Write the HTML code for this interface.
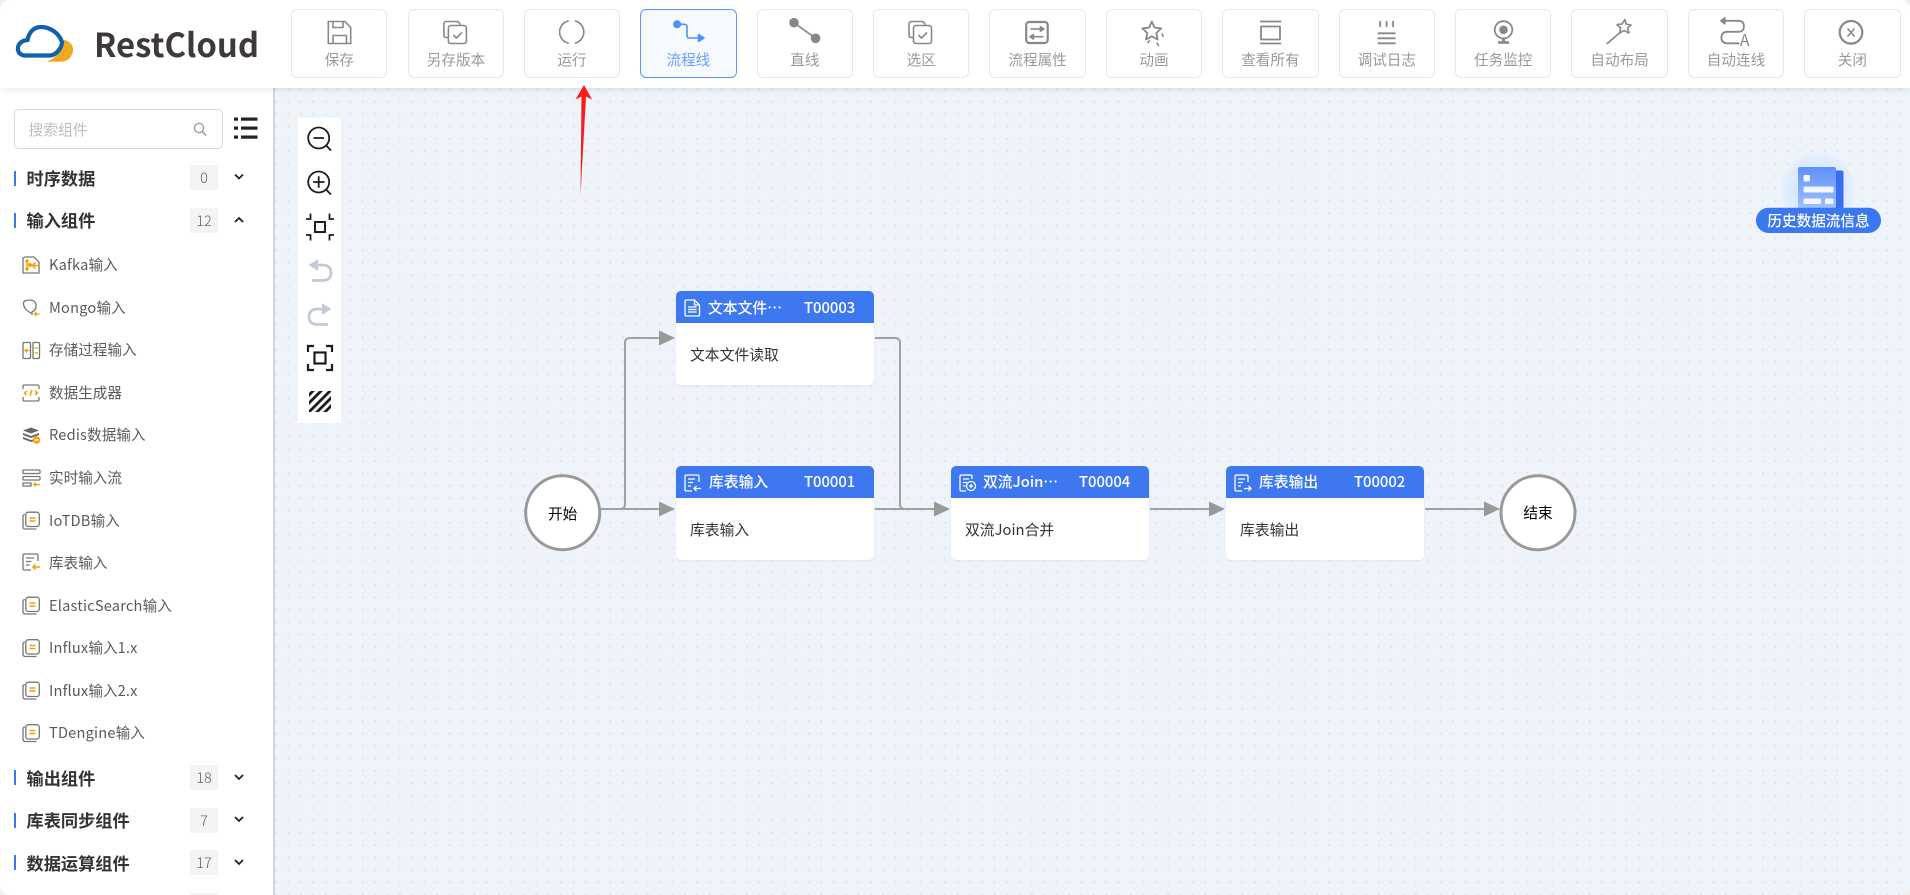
<!DOCTYPE html>
<html lang="zh"><head><meta charset="utf-8"><title>RestCloud</title>
<style>
html,body{margin:0;padding:0;width:1910px;height:895px;overflow:hidden;background:#efefef}
*{box-sizing:border-box}
#p{position:absolute;left:0;top:0;width:1910px;height:895px;overflow:hidden;border-radius:10px;background:#fff;font-family:"Noto Sans CJK SC","Liberation Sans",sans-serif;font-size:14.6px}
#cv{position:absolute;left:275px;top:88px;width:1635px;height:807px;background-color:#eff3fa;background-image:radial-gradient(circle at center,#dfe3ea 0,#dfe3ea .9px,transparent 1.3px);background-size:12.4px 12.4px;background-position:-5.2px -4.9px}
#sb{position:absolute;left:273px;top:88px;width:2px;height:807px;background:#d2d5da}
#hd{position:absolute;left:0;top:0;width:1910px;height:88px;background:#fff;box-shadow:0 1px 7px rgba(60,70,90,.14)}
.b{position:absolute;top:9px;width:96.4px;height:69px;border:1px solid #e1e9f4;border-radius:6px;background:#fff}
.b span{position:absolute;left:0;right:0;top:40px;line-height:20px;text-align:center;color:#999;white-space:nowrap}
.b.on{border-color:#5b97fb;background:#f6faff}.b.on span{color:#66a0fd}
.t{position:absolute;line-height:20px;height:20px;white-space:nowrap}
.it{left:49px;color:#5a5a5a}
.l{letter-spacing:.2px}
.h{left:26.5px;font-size:17.2px;font-weight:700;color:#333;line-height:24px;height:24px}
.bar{position:absolute;left:14px;width:2px;height:15px;background:#3b78f0}
.n{position:absolute;left:190px;width:28px;height:25px;background:#f4f4f4;color:#666;text-align:center;line-height:25px;font-weight:300}
.node{position:absolute;width:198px;height:94px;background:#fff;border-radius:5px;box-shadow:0 1px 2px rgba(60,80,120,.07)}
.node i{position:absolute;left:0;top:0;width:198px;height:32px;background:#3d78f0;border-radius:5px 5px 0 0}
.w{color:#fff;font-weight:500;font-size:14.8px}
.d{color:#333;font-size:14.8px}
#s{position:absolute;left:14px;top:109px;width:209px;height:40px;border:1px solid #d9d9d9;border-radius:5px;background:#fff}
#ov{position:absolute;left:0;top:0;width:1910px;height:895px}
</style></head><body><div id="p">
<div id="cv"></div><div id="sb"></div>

<div class="node" style="left:676px;top:291px"><i></i></div>
<div class="node" style="left:676px;top:466px"><i></i></div>
<div class="node" style="left:951px;top:466px"><i></i></div>
<div class="node" style="left:1226px;top:466px"><i></i></div>

<svg style="position:absolute;left:0;top:0" width="1910" height="895" fill="none">
<g stroke="#a2a2a2" stroke-width="2">
<path d="M601 509H620q5 0 5-5V343q0-5 5-5H660"/>
<path d="M601 509H660"/>
<path d="M875 338H895q5 0 5 5V504q0 5 5 5H935"/>
<path d="M875 509H935"/>
<path d="M1150 509H1210"/>
<path d="M1425 509H1485"/>
</g>
<g fill="#999">
<path d="M659 330.500L675 338L659 345.500z"/><path d="M659 501.500L675 509L659 516.500z"/>
<path d="M934 501.500L950 509L934 516.500z"/><path d="M1209 501.500L1225 509L1209 516.500z"/><path d="M1484 501.500L1500 509L1484 516.500z"/>
</g>
<circle cx="562.700" cy="512.700" r="37" fill="#fff" stroke="#999" stroke-width="3"/>
<circle cx="1538" cy="512.700" r="37" fill="#fff" stroke="#999" stroke-width="3"/>
<!-- history widget -->
<defs><radialGradient id="hg" cx=".5" cy=".5" r=".5"><stop offset="0" stop-color="#c4ddff"/><stop offset=".7" stop-color="#dceaff"/><stop offset="1" stop-color="#e6f0fe"/></radialGradient>
<linearGradient id="dg" x1="0" y1="0" x2="0" y2="1"><stop offset="0" stop-color="#5f90fb"/><stop offset="1" stop-color="#a2c0ff"/></linearGradient>
<clipPath id="hc"><rect x="309" y="391" width="22" height="21"/></clipPath></defs>
<circle cx="1818" cy="190" r="37" fill="url(#hg)"/>
<rect x="1834" y="170.500" width="9.500" height="38" rx="2" fill="#3a6df2"/>
<rect x="1798" y="167" width="38" height="42" rx="2" fill="url(#dg)"/>
<g fill="#f2f6ff"><rect x="1803.500" y="175" width="6.500" height="6.500" rx="1"/><rect x="1803.500" y="186.500" width="30" height="6" rx="1"/><rect x="1803.500" y="198.500" width="17.500" height="5.500" rx="1"/><rect x="1825" y="198.500" width="8.500" height="5.500" rx="1"/></g>
<rect x="1756" y="207.700" width="125" height="25.300" rx="12.600" fill="#3b78f0"/>
</svg>

<div class="t" style="left:1756px;top:211px;width:125px;text-align:center;color:#fff;font-weight:500;font-size:14.6px">历史数据流信息</div>
<div class="t" style="left:532.700px;top:504px;width:60px;text-align:center;color:#000">开始</div>
<div class="t" style="left:1508px;top:503px;width:60px;text-align:center;color:#000">结束</div>

<div class="t w" style="left:708px;top:297.500px">文本文件…</div><div class="t w" style="left:804px;top:297.500px">T00003</div>
<div class="t d" style="left:690px;top:345px">文本文件读取</div>
<div class="t w" style="left:709px;top:472px">库表输入</div><div class="t w" style="left:804px;top:472px">T00001</div>
<div class="t d" style="left:690px;top:520px">库表输入</div>
<div class="t w" style="left:983px;top:472px">双流Join…</div><div class="t w" style="left:1079px;top:472px">T00004</div>
<div class="t d" style="left:965px;top:520px">双流Join合并</div>
<div class="t w" style="left:1259px;top:472px">库表输出</div><div class="t w" style="left:1354px;top:472px">T00002</div>
<div class="t d" style="left:1240px;top:520px">库表输出</div>

<div id="hd">
<div class="b" style="left:291px"><span>保存</span></div>
<div class="b" style="left:408px;width:96px"><span>另存版本</span></div>
<div class="b" style="left:523.800px"><span>运行</span></div>
<div class="b on" style="left:640.200px"><span>流程线</span></div>
<div class="b" style="left:756.600px"><span>直线</span></div>
<div class="b" style="left:873px"><span>选区</span></div>
<div class="b" style="left:989.400px"><span>流程属性</span></div>
<div class="b" style="left:1105.800px"><span>动画</span></div>
<div class="b" style="left:1222.200px"><span>查看所有</span></div>
<div class="b" style="left:1338.600px"><span>调试日志</span></div>
<div class="b" style="left:1455px"><span>任务监控</span></div>
<div class="b" style="left:1571.400px"><span>自动布局</span></div>
<div class="b" style="left:1687.800px"><span>自动连线</span></div>
<div class="b" style="left:1804.200px"><span>关闭</span></div>
</div>

<div id="s"></div>
<div class="t" style="left:28.500px;top:120px;color:#bdbdbd;font-size:14.8px">搜索组件</div>

<div class="bar" style="top:171px"></div><div class="t h" style="top:166px">时序数据</div><div class="n" style="top:165px">0</div>
<div class="bar" style="top:213px"></div><div class="t h" style="top:208px">输入组件</div><div class="n" style="top:208px">12</div>
<div class="t it" style="top:255px"><span class="l">Kafka</span>输入</div>
<div class="t it" style="top:297.700px"><span class="l">Mongo</span>输入</div>
<div class="t it" style="top:340px">存储过程输入</div>
<div class="t it" style="top:382.700px">数据生成器</div>
<div class="t it" style="top:425px"><span class="l">Redis</span>数据输入</div>
<div class="t it" style="top:467.500px">实时输入流</div>
<div class="t it" style="top:510.500px"><span class="l">IoTDB</span>输入</div>
<div class="t it" style="top:552.700px">库表输入</div>
<div class="t it" style="top:596px"><span class="l">ElasticSearch</span>输入</div>
<div class="t it" style="top:637.700px"><span class="l">Influx</span>输入<span class="l">1.x</span></div>
<div class="t it" style="top:680.500px"><span class="l">Influx</span>输入<span class="l">2.x</span></div>
<div class="t it" style="top:723px"><span class="l">TDengine</span>输入</div>
<div class="bar" style="top:770px"></div><div class="t h" style="top:766px">输出组件</div><div class="n" style="top:765px">18</div>
<div class="bar" style="top:812.500px"></div><div class="t h" style="top:808px">库表同步组件</div><div class="n" style="top:808px">7</div>
<div class="bar" style="top:855px"></div><div class="t h" style="top:850.500px">数据运算组件</div><div class="n" style="top:850px">17</div>
<div class="n" style="top:893px"></div>

<svg id="ov" width="1910" height="895" fill="none">
<!-- logo -->
<path d="M65 40C71 42 73.500 46 73 51C72 57 68 61.500 61 61.700H47C56 58 62 50 64 40z" fill="#efaa22"/>
<path d="M24 55.500C19 54.500 17.500 51 18 47.500C18.500 43.500 22 40.500 27.500 40C29 32 34 27 41 27C50 27 59 33 62 42C62 47 57 55.500 49 55.500z" stroke="#0f61ae" stroke-width="4.200" fill="#fff"/>
<text x="94" y="56.800" font-family="Noto Sans CJK SC,Liberation Sans,sans-serif" font-size="33" font-weight="700" fill="#3f3a39" textLength="165" lengthAdjust="spacingAndGlyphs">RestCloud</text>

<!-- toolbar icons -->
<g stroke="#888" stroke-width="1.600" stroke-linejoin="round">
<g transform="translate(319.500,16)"><path d="M8.800 5.500H25.500L31.200 11.500V27.500H8.800z"/><path d="M13.500 5.500V11.500H23.500V5.500"/><path d="M13.500 27.500V19.500H27V27.500"/></g>
<g transform="translate(435.400,16)"><path id="q" d="M13 21.500H11Q8.500 21.500 8.500 19V8Q8.500 5.500 11 5.500H21Q24.500 5.500 24.500 9.500"/><rect x="13" y="9.500" width="18" height="18" rx="2.500"/><path d="M18 19L21 22L26.500 16.500"/></g>
<g transform="translate(551.700,16)"><path d="M17 4.800A11.500 11.500 0 0 0 17 27.300"/><path d="M23 4.800A11.500 11.500 0 0 1 23 27.300"/></g>
<g transform="translate(668.500,16)" stroke="#4f90fb"><circle cx="8.600" cy="8.300" r="3.200" fill="#4f90fb"/><path d="M8.600 8.300H16Q18.500 8.300 18.500 10.800V19.500Q18.500 22 21 22H32"/><path d="M30 18.500L35.500 22L30 25.500z" fill="#4f90fb"/></g>
<g transform="translate(784.600,16)"><path d="M9.400 6.700L31 22.300"/><circle cx="9.400" cy="6.700" r="4" fill="#888"/><circle cx="31" cy="22.300" r="4" fill="#888"/></g>
<g transform="translate(901,16)"><path d="M12.500 21.500H10.500Q8 21.500 8 19V8Q8 5.500 10.500 5.500H20.500Q24 5.500 24 9.500"/><rect x="12.500" y="9.500" width="18" height="18" rx="2.500"/><path d="M17.500 19L20.500 22L26 16.500"/></g>
<g transform="translate(1017.400,16)"><rect x="8.800" y="6" width="21.500" height="21" rx="3" stroke-width="2.200"/><path d="M13 13H25" /><path d="M23 10.800L26.500 13L23 15.200z" fill="#888"/><path d="M14 20.700H26"/><path d="M16 18.500L12.500 20.700L16 22.900z" fill="#888"/></g>
<g transform="translate(1133.800,16)"><path d="M18 5.500L20.700 11.600L27.500 12.400L22.500 17L23.800 23.500L18 20.300L12.200 23.500L13.500 17L8.500 12.400L15.300 11.600z" stroke-width="1.800"/><path d="M13.500 27L16 24.500M25 30L23 26.500M29.500 21L28 17.500"/></g>
<g transform="translate(1250.200,16)"><path d="M9.800 5.500H31M9.800 27.500H31" stroke-width="1.800"/><rect x="10.800" y="10.500" width="19" height="13" stroke-width="1.800"/></g>
<g transform="translate(1366.600,16)" stroke-width="1.800"><path d="M13.600 5V11M20 5V11M26.500 5V11"/><path d="M11 17.300H29M11 22.300H29M11 27.300H29"/></g>
<g transform="translate(1483,16)"><ellipse cx="20.500" cy="13.800" rx="8.800" ry="8.600" stroke-width="1.800"/><circle cx="20.500" cy="13.800" r="3.500" fill="#888"/><path d="M20.500 22.500V25.500" stroke-width="3"/><path d="M15 26.500H26" stroke-width="2.600"/></g>
<g transform="translate(1599,16)"><path d="M7.700 28L21 16.500" stroke-width="1.800"/><path d="M26 3.500L27 8L32 9L28.500 12L30 17L25 14.500L21 17L21.500 12L18 8.500L23 8z"/></g>
<g transform="translate(1715.400,16)"><path d="M8 4.800H23Q28.500 4.800 28.500 10.300T23 15.800H12Q6 15.800 6 21.500T12 27.300H24" stroke-width="1.800"/><path d="M9.500 1.800L5.500 4.800L9.500 7.800z" fill="#888"/></g>
<g transform="translate(1832,16)"><circle cx="19" cy="16.300" r="11.300" stroke-width="2.200"/><path d="M15.500 12.500L22.500 20.500M22.500 12.500L15.500 20.500"/></g>
</g>
<text x="1744.800" y="46" text-anchor="middle" font-family="Noto Sans CJK SC,sans-serif" font-size="16" fill="#888">A</text>

<!-- search + list -->
<circle cx="199" cy="128" r="4.600" stroke="#999" stroke-width="1.300"/><path d="M202.300 131.500L206 135.500" stroke="#999" stroke-width="1.400"/>
<g fill="#222"><rect x="234" y="117.500" width="4" height="3.200"/><rect x="241" y="117.500" width="16.500" height="3.200"/><rect x="234" y="126.500" width="4" height="3.200"/><rect x="241" y="126.500" width="16.500" height="3.200"/><rect x="234" y="135.500" width="4" height="3.200"/><rect x="241" y="135.500" width="16.500" height="3.200"/></g>
<g stroke="#222" stroke-width="1.800"><path d="M235 174.500L239 178.500L243 174.500"/><path d="M235 222L239 218L243 222"/><path d="M235 775L239 779L243 775"/><path d="M235 817L239 821L243 817"/><path d="M235 860L239 864L243 860"/></g>

<!-- sidebar icons -->
<g stroke-width="1.300">
<g transform="translate(22,256)"><path d="M3 1H12L17 6V17H1V2z" stroke="#777"/><g fill="#f5a000" stroke="none"><circle cx="5" cy="5" r="1.800"/><circle cx="5" cy="13" r="1.800"/><circle cx="8" cy="9" r="2"/><rect x="4.300" y="5" width="1.400" height="8"/></g><path d="M17 9.500H10.500M13.500 6.500L10.500 9.500L13.500 12.500" stroke="#f5a000" stroke-width="1.500"/></g>
<g transform="translate(22,299)"><path d="M10 14C5 13 2 9 1.500 5C1 2 4 1 8 1C12 1 14.500 3.500 14 8C13.800 10 12 12 10 13V16" stroke="#777"/><path d="M17.500 15H12.500M14.500 13L12.500 15L14.500 17" stroke="#f5a000"/></g>
<g transform="translate(22,341)"><rect x="1" y="1.500" width="7.500" height="16" rx="1" stroke="#777"/><rect x="11" y="1.500" width="6.500" height="16" rx="1" stroke="#777"/><path d="M7.500 9.500H3M5 7.500L3 9.500L5 11.500M12.500 7H16M12.500 12H16" stroke="#f5a000"/></g>
<g transform="translate(22,384)"><path d="M1 5V2.500Q1 1 2.500 1H15.500Q17 1 17 2.500V5M1 13V15.500Q1 17 2.500 17H15.500Q17 17 17 15.500V13" stroke="#777"/><path d="M4.800 7L2.500 9L4.800 11M13.200 7L15.500 9L13.200 11M10 6L8 12" stroke="#f5a000" stroke-width="1.500"/></g>
<g transform="translate(22,426)"><g fill="#666"><path d="M1 4.500L9 1.500L17 4.500L9 7.500z"/><path d="M1 7L9 10L17 7V9L9 12L1 9z"/><path d="M1 11L9 14L11 13.500V15.500L9 16L1 13z"/></g><circle cx="14.500" cy="14" r="3.700" fill="#f5a000"/><path d="M12.500 14H16.500" stroke="#fff"/></g>
<g transform="translate(22,469)"><rect x="1" y="1" width="17" height="3.500" rx=".5" stroke="#777"/><rect x="1" y="7.500" width="17" height="3.500" rx=".5" stroke="#777"/><path d="M1 14H9V17H1z" stroke="#777"/><path d="M18 15.500H12M14 13.500L12 15.500L14 17.500" stroke="#f5a000"/></g>
<g id="db" transform="translate(22,511)"><path d="M2.800 3.500Q1 3.800 1 5.500V15.500Q1 18 3.500 18H14.500" stroke="#777"/><rect x="3.800" y="1.200" width="13.500" height="14.300" rx="2.500" stroke="#777"/><path d="M7.500 7H13.500M7.500 10H13.500" stroke="#f5a000" stroke-width="1.500"/></g>
<g transform="translate(22,553)"><path d="M16 8V2.500Q16 1 14.500 1H2.500Q1 1 1 2.500V15.500Q1 17 2.500 17H9" stroke="#777"/><path d="M4 5H12M4 8.500H9.500M4 12H7.500" stroke="#777"/><path d="M18 14H11M13.500 11.500L11 14L13.500 16.500" stroke="#f5a000" stroke-width="1.500"/></g>
<use href="#db" transform="translate(0,85)"/><use href="#db" transform="translate(0,127.500)"/><use href="#db" transform="translate(0,170)"/><use href="#db" transform="translate(0,212.500)"/>
</g>

<!-- canvas toolbar -->
<rect x="298" y="118" width="43" height="305" fill="#fff"/>
<g stroke="#1d1d1d" stroke-width="1.800">
<circle cx="318.700" cy="138" r="10.500"/><path d="M313.500 138H324M326.500 145.800L331 150.500"/>
<circle cx="318.700" cy="182" r="10.500"/><path d="M313 182H324.500M318.700 176.300V187.700M326.500 190L331 194.500"/>
<rect x="315" y="222" width="10" height="10" stroke-width="2"/>
<path d="M306 219H310.500V213.500M334 219H329.500V213.500M306 235H310.500V240.500M334 235H329.500V240.500" stroke-width="1.800"/>
<rect x="314.500" y="352.500" width="11" height="11" stroke-width="2.200"/>
<path d="M308 352V346H314M326 346H332V352M308 364V370H314M326 370H332V364" stroke-width="2.200"/>
<g clip-path="url(#hc)"><path d="M306 398L314 390M306 406L322 390M307 414L331 390M315 414L333 396M323 414L335 402" stroke-width="2.800"/></g>
</g>
<g stroke="#c1c9da" stroke-width="2.800">
<path d="M311 265H322Q331 265 331 272.800T322 280.500H312"/>
<path d="M318 260L310 265L318 270" fill="#c1c9da" stroke-width="1.500"/>
<path d="M329 309H318Q309 309 309 316.800T318 324.500H328"/>
<path d="M322 304L330 309L322 314" fill="#c1c9da" stroke-width="1.500"/>
</g>
<!-- red arrow -->
<path d="M584 85L592 99.500L586 96.500L580.500 195L581.500 96.500L575.500 99.500z" fill="#fb1a1a"/>
<!-- node header icons -->
<g stroke="#fff" stroke-width="1.300">
<g transform="translate(684,299)"><path d="M2 1H10.500L15.500 6V16Q15.500 17 14.500 17H2Q1 17 1 16V2Q1 1 2 1z"/><path d="M10.500 1V6H15.500M4 8H12.500M4 10.500H12.500M4 13H12.500"/></g>
<g transform="translate(684,474)"><path d="M15 8V2.500Q15 1 13.500 1H2.500Q1 1 1 2.500V15.500Q1 17 2.500 17H8"/><path d="M4 5H11M4 8.500H9M4 12H7M17 14.500H10M12.500 12L10 14.500L12.500 17"/></g>
<g transform="translate(959,474)"><path d="M13 5V2.500Q13 1 11.500 1H2.500Q1 1 1 2.500V15.500Q1 17 2.500 17H7"/><path d="M4 5H10M4 8.500H8M4 12H6.500"/><circle cx="12" cy="12" r="4.500"/><path d="M10 12H14M12 10V14"/></g>
<g transform="translate(1234,474)"><path d="M14 8V2.500Q14 1 12.500 1H2.500Q1 1 1 2.500V15.500Q1 17 2.500 17H8"/><path d="M4 5H11M4 8.500H9M4 12H7M10 14.500H17M14.500 12L17 14.500L14.500 17"/></g>
</g>
</svg>
</div></body></html>
